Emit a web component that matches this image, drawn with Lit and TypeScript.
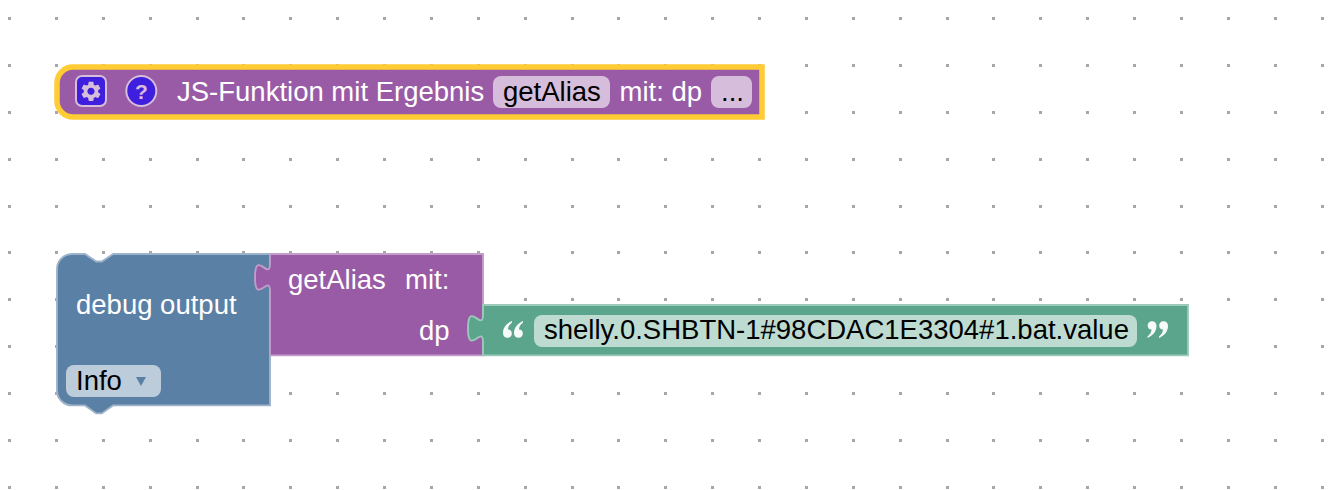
import { LitElement, html, css, svg } from "lit";
import { customElement } from "lit/decorators.js";

const W = 1336, H = 490;
const STEP = 46.875;

function dots() {
  const out = [];
  for (let i = 0; i < 30; i++) {
    for (let j = 0; j < 11; j++) {
      out.push(svg`<rect class="dot" x=${Math.round(8 + i * STEP)} y=${Math.round(17 + j * STEP)} width="3" height="3"></rect>`);
    }
  }
  return out;
}

const GEAR = "M19.14,12.94c0.04-0.3,0.06-0.61,0.06-0.94c0-0.32-0.02-0.64-0.07-0.94l2.03-1.58c0.18-0.14,0.23-0.41,0.12-0.61l-1.92-3.32c-0.12-0.22-0.37-0.29-0.59-0.22l-2.39,0.96c-0.5-0.38-1.03-0.7-1.62-0.94L14.4,2.81c-0.04-0.24-0.24-0.41-0.48-0.41h-3.84c-0.24,0-0.43,0.17-0.47,0.41L9.25,5.35C8.66,5.59,8.12,5.92,7.63,6.29L5.24,5.33c-0.22-0.08-0.47,0-0.59,0.22L2.74,8.87C2.62,9.08,2.66,9.34,2.86,9.48l2.03,1.58C4.84,11.36,4.8,11.69,4.8,12s0.02,0.64,0.07,0.94l-2.03,1.58c-0.18,0.14-0.23,0.41-0.12,0.61l1.92,3.32c0.12,0.22,0.37,0.29,0.59,0.22l2.39-0.96c0.5,0.38,1.03,0.7,1.62,0.94l0.36,2.54c0.05,0.24,0.24,0.41,0.48,0.41h3.84c0.24,0,0.44-0.17,0.47-0.41l0.36-2.54c0.59-0.24,1.13-0.56,1.62-0.94l2.39,0.96c0.22,0.08,0.47,0,0.59-0.22l1.92-3.32c0.12-0.22,0.07-0.47-0.12-0.61L19.14,12.94z M12,15.6c-1.98,0-3.6-1.62-3.6-3.6s1.62-3.6,3.6-3.6s3.6,1.62,3.6,3.6S13.98,15.6,12,15.6z";
const TAB_UP = "c0,-18.75 -15,15 -15,-14 s15,4.700 15,-14";
const QUOTE = "M9.500 0C4 2.500 .500 6.500 .500 12C.500 15 2.200 16.800 5 16.800C7.700 16.800 9.300 15 9.300 12.500C9.300 10 7.800 8.500 5.500 8.500C5.500 5.500 7.300 3.300 9.500 1.500Z";
const HAT = "M57 83a16 16 0 0 1 16-16H762V117H73a16 16 0 0 1-16-16z";

@customElement("app-root")
export class AppRoot extends LitElement {
  static styles = css`
    :host { display: block; width: 1336px; height: 490px; background: #fff; overflow: hidden; }
    svg { display: block; }
    text { font-family: "Liberation Sans", Arial, sans-serif; font-size: 27.5px; fill: #fff; }
    .dark { fill: #000; }
    .dot { fill: #a6a6a6; }
    .fn { fill: #995ba5; }
    .fn-s { stroke: #c29dc9; stroke-width: 1.875; }
    .debug { fill: #5b80a5; stroke: #9db3c9; stroke-width: 1.875; }
    .str { fill: #5ba58c; stroke: #9dc9ba; stroke-width: 1.875; }
    .edit-fn { fill: #d6bddb; }
    .edit-debug { fill: #bdccdb; }
    .edit-str { fill: #bddbd1; }
    .btn { fill: #3f1fdd; stroke: #d6bddb; stroke-width: 2; }
    .glyph { fill: #d6bddb; }
    text.q { font-weight: 700; font-size: 21px; fill: #d6bddb; }
    .arrow { fill: #5b80a5; }
    .sel { fill: none; stroke: #ffcc33; stroke-width: 5.5; }
    .quote { fill: #fff; opacity: .95; }
  `;

  render() {
    return html`<svg width=${W} height=${H} viewBox="0 0 ${W} ${H}">
      ${dots()}

      <!-- procedure definition, selected -->
      <path class="fn" d=${HAT}></path>
      <path class="sel" d=${HAT}></path>
      <rect class="btn" x="76" y="76" width="30" height="30" rx="6"></rect>
      <path class="glyph" transform="translate(79 79.300)" d=${GEAR} fill-rule="evenodd"></path>
      <circle class="btn" cx="141.300" cy="91" r="15"></circle>
      <text class="q" x="141.300" y="98.500" text-anchor="middle">?</text>
      <text x="177" y="101">JS-Funktion mit Ergebnis</text>
      <rect class="edit-fn" x="493" y="76" width="117" height="32" rx="8"></rect>
      <text class="dark" x="503" y="101">getAlias</text>
      <text x="619.500" y="101">mit: dp</text>
      <rect class="edit-fn" x="711" y="76" width="41" height="32" rx="8"></rect>
      <text class="dark" x="721" y="101">...</text>

      <!-- debug block -->
      <path class="debug" d="M57 269a15 15 0 0 1 15-15H85l11.250 7.500h5.600l11.250-7.500H270V405.400H113l-11.250 8h-5.600L85 405.400H72a15 15 0 0 1-15-15z"></path>
      <text x="76" y="314">debug output</text>
      <rect class="edit-debug" x="66" y="365" width="95" height="32" rx="8"></rect>
      <text class="dark" x="76" y="390">Info</text>
      <path class="arrow" d="M136 377h10l-5 9z"></path>

      <!-- function call block -->
      <path class="fn fn-s" d="M270 254H483V355.400H270V291.400${TAB_UP}V254Z"></path>
      <text x="288" y="289">getAlias</text>
      <text x="405" y="289">mit:</text>
      <text x="419" y="340">dp</text>

      <!-- string block -->
      <path class="str" d="M483 305H1188V355.400H483V342.400${TAB_UP}V305Z"></path>
      <path class="quote" transform="translate(502.500 321)" d=${QUOTE}></path>
      <path class="quote" transform="translate(513.500 321)" d=${QUOTE}></path>
      <rect class="edit-str" x="534" y="315" width="603" height="32" rx="8"></rect>
      <text class="dark" x="544" y="339">shelly.0.SHBTN-1#98CDAC1E3304#1.bat.value</text>
      <path class="quote" transform="translate(1157 338) rotate(180)" d=${QUOTE}></path>
      <path class="quote" transform="translate(1168.500 338) rotate(180)" d=${QUOTE}></path>
    </svg>`;
  }
}
